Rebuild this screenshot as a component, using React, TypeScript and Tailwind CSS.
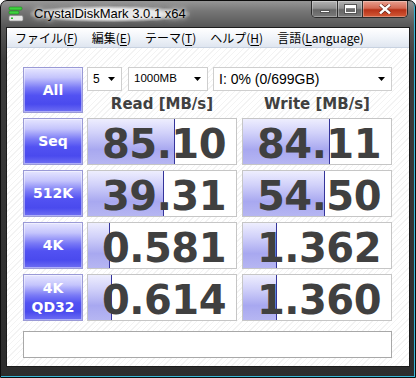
import React from "react";

const DV = "font-['DejaVu_Sans',sans-serif]";

function ModeBtn({ children }: { children: React.ReactNode }) {
  return (
    <div
      className={`w-[60px] h-full shrink-0 flex flex-col items-center justify-center border border-[#9a9ad6] bg-[linear-gradient(to_bottom,#e6e6ff_0%,#c4c4fc_22%,#7a7af6_45%,#5252f2_62%,#4a4aee_82%,#6e6ef2_100%)] shadow-[inset_0_0_0_1px_rgba(255,255,255,0.45)] text-white font-bold text-[14px] leading-[19px] text-center ${DV}`}
    >
      {children}
    </div>
  );
}

function Cell({ value, bar }: { value: string; bar: number }) {
  return (
    <div className="relative w-[150px] h-full shrink-0 border border-[#c6c6c6] bg-white">
      <div
        className="absolute left-0 top-0 bottom-0 border-r border-[#34349a] bg-[linear-gradient(to_bottom,#eeeefe_0%,#d2d2fa_30%,#a8a8f0_68%,#b6b6f2_100%)]"
        style={{ width: bar }}
      />
      <div
        className={`relative h-full flex items-center justify-end pr-[10px] pt-[5px] text-[40px] leading-[40px] font-bold text-[#404040] tracking-[-0.5px] ${DV}`}
      >
        {value}
      </div>
    </div>
  );
}

function Combo({ w, text, size }: { w: string; text: string; size: string }) {
  return (
    <div
      className={`${w} h-full shrink-0 flex items-center justify-between border border-[#cfcfcf] bg-white pl-[5px] pr-[6px] ${size} text-black font-['Liberation_Sans',sans-serif]`}
    >
      <span>{text}</span>
      <svg width="7" height="4" viewBox="0 0 7 4">
        <path d="M0 0H7L3.5 4Z" fill="#000" />
      </svg>
    </div>
  );
}

function MenuItem({ pre, acc, post }: { pre: string; acc: string; post: string }) {
  return (
    <span>
      {pre}
      <span className="underline underline-offset-2">{acc}</span>
      {post}
    </span>
  );
}

const rows = [
  { label: <>Seq</>, r: "85.10", rb: 87, w: "84.11", wb: 87 },
  { label: <>512K</>, r: "39.31", rb: 76, w: "54.50", wb: 82 },
  { label: <>4K</>, r: "0.581", rb: 22, w: "1.362", wb: 34 },
  {
    label: (
      <>
        <span>4K</span>
        <span>QD32</span>
      </>
    ),
    r: "0.614",
    rb: 24,
    w: "1.360",
    wb: 34,
  },
];

export default function App() {
  return (
    <div className="w-[416px] h-[378px] flex flex-col border border-[#0c0c0c] rounded-t-[7px] overflow-hidden bg-[linear-gradient(to_bottom,#969696_0px,#767676_10px,#565656_26px,#3c3c3c_60px,#2c2c2c_100%)] shadow-[inset_-1px_-1px_0_#38b6d6]">
      {/* title bar */}
      <div className="h-[26px] shrink-0 flex items-start">
        <svg className="ml-[7px] mt-[5px]" width="16" height="16" viewBox="0 0 16 16">
          <rect x="1" y="1" width="13" height="3" rx="1" fill="#3fd13f" stroke="#1a8a1a" strokeWidth="0.6" />
          <rect x="1" y="5" width="10" height="3" rx="1" fill="#3fd13f" stroke="#1a8a1a" strokeWidth="0.6" />
          <rect x="1" y="9.5" width="14" height="5.5" rx="1.5" fill="#e8e8e8" stroke="#8a8a8a" strokeWidth="0.7" />
          <rect x="3" y="11.5" width="2" height="1.5" fill="#2dbb2d" />
        </svg>
        <span className="ml-[6px] mt-[5px] text-[13px] leading-[16px] text-black font-['Liberation_Sans',sans-serif] rounded-full bg-[radial-gradient(ellipse_at_center,rgba(235,235,235,0.95)_45%,rgba(200,200,200,0)_75%)] px-[4px] [text-shadow:0_0_4px_#fff,0_0_8px_#fff]">
          CrystalDiskMark 3.0.1 x64
        </span>
        <div className="ml-auto mr-[7px] flex h-[17px] border border-t-0 border-[#2a2a2a] rounded-b-[5px] overflow-hidden">
          <div className="w-[26px] h-full flex items-end justify-center pb-[4px] border-r border-[#303030] bg-[linear-gradient(to_bottom,#b4b4b4_0%,#8e8e8e_45%,#666_55%,#7a7a7a_100%)] shadow-[inset_0_0_0_1px_rgba(255,255,255,0.3)]">
            <div className="w-[10px] h-[3px] bg-white border border-[#555]" />
          </div>
          <div className="w-[25px] h-full flex items-center justify-center border-r border-[#303030] bg-[linear-gradient(to_bottom,#b4b4b4_0%,#8e8e8e_45%,#666_55%,#7a7a7a_100%)] shadow-[inset_0_0_0_1px_rgba(255,255,255,0.3)]">
            <div className="w-[11px] h-[8px] border border-t-[3px] border-white outline outline-1 outline-[#555]" />
          </div>
          <div className="w-[44px] h-full flex items-center justify-center bg-[linear-gradient(to_bottom,#e8a090_0%,#d46a54_45%,#b83218_55%,#d45a38_100%)] shadow-[inset_0_0_0_1px_rgba(255,255,255,0.3)]">
            <svg width="12" height="10" viewBox="0 0 12 10">
              <path d="M1 0.5L11 9.5M11 0.5L1 9.5" stroke="#5a1a10" strokeWidth="3.6" />
              <path d="M1 0.5L11 9.5M11 0.5L1 9.5" stroke="#fff" strokeWidth="2.4" />
            </svg>
          </div>
        </div>
      </div>

      {/* inner frame */}
      <div className="mx-[5px] flex flex-col border border-[#1c1c1c]">
        {/* menu bar */}
        <div className="h-[20px] flex items-center gap-[14px] pl-[8px] border-b border-[#c8d2e0] bg-[linear-gradient(to_bottom,#ffffff_0%,#f2f5fa_45%,#dfe6f0_100%)] text-[12px] text-black font-['Noto_Sans_CJK_JP','Noto_Sans',sans-serif]">
          <MenuItem pre="ファイル(" acc="F" post=")" />
          <MenuItem pre="編集(" acc="E" post=")" />
          <MenuItem pre="テーマ(" acc="T" post=")" />
          <MenuItem pre="ヘルプ(" acc="H" post=")" />
          <MenuItem pre="言語(" acc="L" post="anguage)" />
        </div>

        {/* client */}
        <div className="h-[318px] flex flex-col pl-[16px] pt-[19px] bg-[repeating-linear-gradient(135deg,#ffffff_0px,#ffffff_3px,#f3f3f3_3px,#f3f3f3_4px)]">
          <div className="h-[46px] flex gap-[4px]">
            <ModeBtn>All</ModeBtn>
            <div className="flex flex-col w-[305px]">
              <div className="h-[24px] flex">
                <Combo w="w-[35px]" text="5" size="text-[12px]" />
                <div className="w-[6px]" />
                <Combo w="w-[80px]" text="1000MB" size="text-[11.5px]" />
                <div className="w-[5px]" />
                <Combo w="w-[179px]" text="I: 0% (0/699GB)" size="text-[14px]" />
              </div>
              <div
                className={`h-[22px] pt-[4px] flex gap-[5px] text-[15px] leading-[18px] font-bold text-[#404040] ${DV}`}
              >
                <div className="w-[150px] text-center">Read [MB/s]</div>
                <div className="w-[150px] text-center">Write [MB/s]</div>
              </div>
            </div>
          </div>

          <div className="mt-[5px] flex flex-col gap-[5px]">
            {rows.map((r, i) => (
              <div key={i} className="h-[47px] flex">
                <ModeBtn>{r.label}</ModeBtn>
                <div className="w-[4px]" />
                <Cell value={r.r} bar={r.rb} />
                <div className="w-[5px]" />
                <Cell value={r.w} bar={r.wb} />
              </div>
            ))}
          </div>

          <div className="mt-[10px] w-[369px] h-[27px] border border-[#a8a8a8] bg-white" />
        </div>
      </div>
    </div>
  );
}
